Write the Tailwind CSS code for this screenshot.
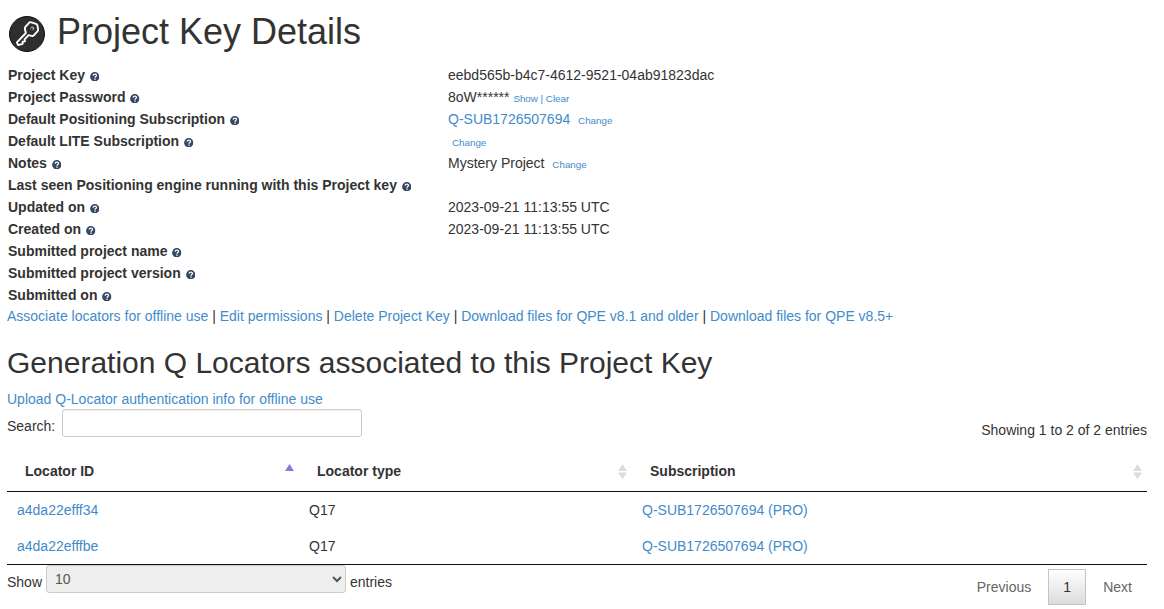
<!DOCTYPE html>
<html lang="en">
<head>
<meta charset="utf-8">
<title>Project Key Details</title>
<script src="https://cdn.jsdelivr.net/npm/@tailwindcss/browser@4"></script>
</head>
<body class="h-[609px] overflow-hidden bg-white px-[7px] font-['Liberation_Sans',Arial,sans-serif] text-[14px] leading-5 text-[#333]">
<svg class="hidden">
  <symbol id="help" viewBox="0 0 18 18"><circle cx="9" cy="9" r="8.800" fill="#344863"/><path d="M5.700 6.800C6.200 4.700 7.400 4 9.100 4c2 0 3.300 1 3.300 2.700 0 2-2.900 2.100-2.900 4.300" fill="none" stroke="#fff" stroke-width="2.400"/><rect x="8.200" y="12.300" width="2.600" height="2.400" fill="#fff"/></symbol>
  <symbol id="sort" viewBox="0 0 9 15"><path d="M4.500 0L9 7H0zM0 8.500h9L4.500 15z" fill="#dcdcdc"/></symbol>
</svg>
<header class="flex h-16 items-start pl-0.5">
  <svg class="mt-4 size-9 shrink-0" viewBox="0 0 36 36"><circle cx="18" cy="18" r="17.500" fill="#2e2e2e" stroke="#111"/><g fill="none" stroke="#fff" stroke-width="1.900" stroke-linejoin="round"><path d="M16.200 11.200l3.800-4.300q1-1.100 2.400-.6l4.600 1.600q1.100.4 1.400 1.500l.7 3.700q.3 1.300-.7 2.300l-3.600 3.900q-.9 1-2.300.6l-2.900-.7-4 4.200.3 2-2.300.2.100 2.300-4.500 1.200-1.300-2.800 9-9.300-.9-3.400q-.3-1.300.2-2.400z"/></g><circle cx="23.300" cy="12.300" r="1.900" fill="#aaa"/><circle cx="22.800" cy="12.800" r="1.100" fill="#2e2e2e"/></svg>
  <h1 class="ml-3 mt-3 text-[36px] leading-10 whitespace-nowrap">Project Key Details</h1>
</header>
<dl class="grid grid-cols-[440px_1fr] auto-rows-[22px] pl-px leading-[22px] whitespace-nowrap">
  <dt class="font-bold">Project Key <svg class="ml-px inline size-[9.500px] align-[-1px]"><use href="#help"/></svg></dt><dd>eebd565b-b4c7-4612-9521-04ab91823dac</dd>
  <dt class="font-bold">Project Password <svg class="ml-px inline size-[9.500px] align-[-1px]"><use href="#help"/></svg></dt><dd>8oW****** <a class="text-[9.800px] text-[#428bca]">Show | Clear</a></dd>
  <dt class="font-bold">Default Positioning Subscription <svg class="ml-px inline size-[9.500px] align-[-1px]"><use href="#help"/></svg></dt><dd><a class="text-[#428bca]">Q-SUB1726507694</a> <a class="ml-1 text-[9.800px] text-[#428bca]">Change</a></dd>
  <dt class="font-bold">Default LITE Subscription <svg class="ml-px inline size-[9.500px] align-[-1px]"><use href="#help"/></svg></dt><dd><a class="ml-1 text-[9.800px] text-[#428bca]">Change</a></dd>
  <dt class="font-bold">Notes <svg class="ml-px inline size-[9.500px] align-[-1px]"><use href="#help"/></svg></dt><dd>Mystery Project <a class="ml-1 text-[9.800px] text-[#428bca]">Change</a></dd>
  <dt class="font-bold">Last seen Positioning engine running with this Project key <svg class="ml-px inline size-[9.500px] align-[-1px]"><use href="#help"/></svg></dt><dd></dd>
  <dt class="font-bold">Updated on <svg class="ml-px inline size-[9.500px] align-[-1px]"><use href="#help"/></svg></dt><dd>2023-09-21 11:13:55 UTC</dd>
  <dt class="font-bold">Created on <svg class="ml-px inline size-[9.500px] align-[-1px]"><use href="#help"/></svg></dt><dd>2023-09-21 11:13:55 UTC</dd>
  <dt class="font-bold">Submitted project name <svg class="ml-px inline size-[9.500px] align-[-1px]"><use href="#help"/></svg></dt><dd></dd>
  <dt class="font-bold">Submitted project version <svg class="ml-px inline size-[9.500px] align-[-1px]"><use href="#help"/></svg></dt><dd></dd>
  <dt class="font-bold">Submitted on <svg class="ml-px inline size-[9.500px] align-[-1px]"><use href="#help"/></svg></dt><dd></dd>
</dl>
<nav class="h-5 whitespace-nowrap"><a class="text-[#428bca]">Associate locators for offline use</a> | <a class="text-[#428bca]">Edit permissions</a> | <a class="text-[#428bca]">Delete Project Key</a> | <a class="text-[#428bca]">Download files for QPE v8.1 and older</a> | <a class="text-[#428bca]">Download files for QPE v8.5+</a></nav>
<h2 class="mt-[17px] h-[46px] text-[30px] leading-10 whitespace-nowrap">Generation Q Locators associated to this Project Key</h2>
<div class="h-5"><a class="text-[#428bca]">Upload Q-Locator authentication info for offline use</a></div>
<div class="flex h-[42px] w-[1140px] items-start">
  <label class="mt-[7px] w-[55px]" for="q">Search:</label>
  <input id="q" class="h-7 w-[300px] rounded-[3px] border border-[#ccc] bg-white px-2 shadow-[inset_0_1px_1px_rgba(0,0,0,0.075)]">
  <div class="mt-[11px] ml-auto">Showing 1 to 2 of 2 entries</div>
</div>
<table class="w-[1140px] table-fixed border-separate border-spacing-0 text-left">
  <colgroup><col class="w-[292px]"><col class="w-[333px]"><col></colgroup>
  <thead>
    <tr class="h-[41px]">
      <th class="border-b border-[#111] py-0 pr-[5px] pl-[18px]"><div class="flex items-center justify-between">Locator ID<svg class="mb-[7px] h-[7px] w-[9px]" viewBox="0 0 9 7"><path d="M4.500 0L9 7H0z" fill="#7f7fdc"/></svg></div></th>
      <th class="border-b border-[#111] py-0 pr-[5px] pl-[18px]"><div class="flex items-center justify-between">Locator type<svg class="h-[15px] w-[9px]"><use href="#sort"/></svg></div></th>
      <th class="border-b border-[#111] py-0 pr-[5px] pl-[18px]"><div class="flex items-center justify-between">Subscription<svg class="h-[15px] w-[9px]"><use href="#sort"/></svg></div></th>
    </tr>
  </thead>
  <tbody>
    <tr class="h-9"><td class="px-2.5 py-0"><a class="text-[#428bca]">a4da22efff34</a></td><td class="px-2.5 py-0">Q17</td><td class="px-2.5 py-0"><a class="text-[#428bca]">Q-SUB1726507694 (PRO)</a></td></tr>
    <tr class="h-[37px]"><td class="border-b border-[#111] px-2.5 py-0"><a class="text-[#428bca]">a4da22efffbe</a></td><td class="border-b border-[#111] px-2.5 py-0">Q17</td><td class="border-b border-[#111] px-2.5 py-0"><a class="text-[#428bca]">Q-SUB1726507694 (PRO)</a></td></tr>
  </tbody>
</table>
<footer class="flex w-[1140px] items-start">
  <span class="mt-[7px] w-[39px]">Show</span>
  <select class="h-7 w-[300px] rounded-[3px] border border-[#ccc] bg-[#eee] px-1 text-[#555]"><option>10</option></select>
  <span class="mt-[7px] ml-1">entries</span>
  <div class="mt-1 ml-auto flex h-9 items-center text-[#666]">
    <a class="px-[15px]">Previous</a>
    <a class="ml-0.5 flex h-9 w-[38px] items-center justify-center border border-[#c4c4c4] bg-gradient-to-b from-white to-[#dcdcdc] text-[#333]">1</a>
    <a class="ml-0.5 px-[15px]">Next</a>
  </div>
</footer>
</body>
</html>
